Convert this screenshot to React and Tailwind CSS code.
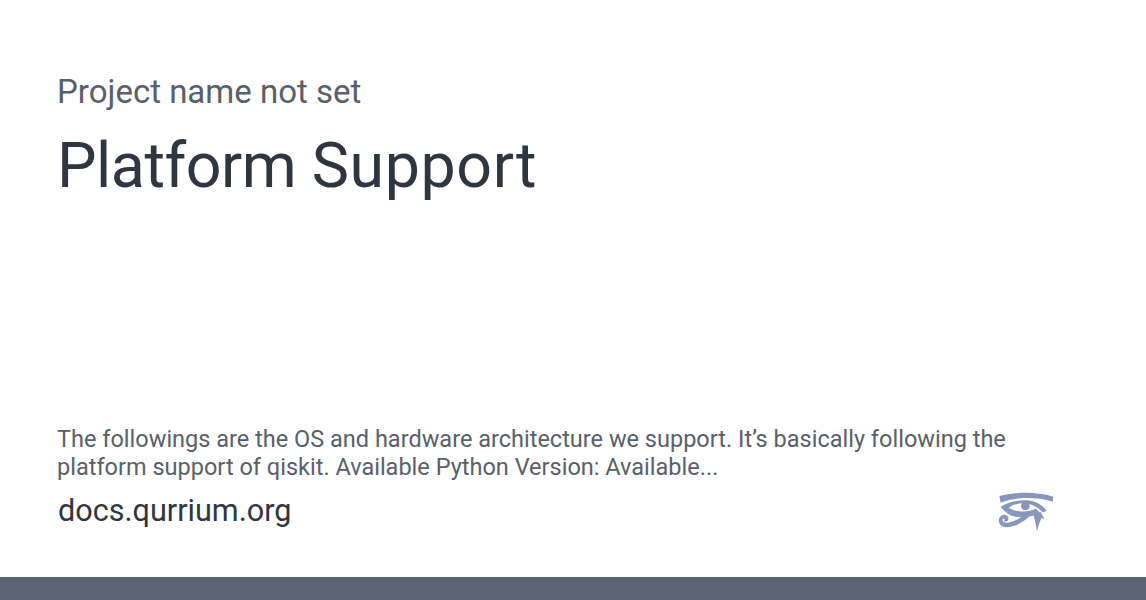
function EyeLogo() {
  return (
    <svg viewBox="54 43 168 120" className="w-14 h-10 shrink-0" fill="#8a97bb">
      {/* brow */}
      <path d="M58 58 C100 48 160 42 220 60 L218 75 C190 67 170 64 135 64 C110 64 85 69 62 78 Z" />
      {/* upper lid and lower lid */}
      <path d="M62 90 C85 76 112 70 140 71 C165 72 190 86 200 103 L188 107 C172 90 152 80 128 80 C110 80 96 86 86 93 C102 104 125 107 150 102 L168 96 L180 108 C160 120 125 124 105 120 C88 116 72 104 62 90 Z" />
      {/* iris */}
      <circle cx="136" cy="88" r="13" />
      {/* tear */}
      <path d="M160 114 L182 106 L188 118 L194 128 L184 124 L178 140 L171 164 L166 136 Z" />
      {/* spiral */}
      <path d="M152 116 C132 136 105 150 82 152 C64 153 53 140 57 126 C61 112 80 110 85 122 C88 132 78 138 71 133 C76 128 72 122 68 128 C66 135 74 140 84 138 C105 134 125 122 142 110 Z" />
    </svg>
  )
}

function App() {
  return (
    <div className="h-[600px] w-full flex flex-col bg-white font-['Roboto',sans-serif]">
      <div className="flex-1 flex flex-col justify-between pl-[57px] pr-[92px] pt-[70px] pb-[44px]">
        {/* Header */}
        <div>
          <p className="text-[33px] leading-[44px] text-[#596069]">Project name not set</p>
          <h1 className="text-[62.7px] leading-[75px] mt-[14px] text-[#2f3640]">
            <span className="tracking-[-0.5px]">Platform</span>{' '}
            <span className="tracking-[0.6px]">Support</span>
          </h1>
        </div>

        {/* Description and footer */}
        <div>
          <p className="text-[23.52px] leading-[28px] text-[#596069]">
            The followings are the OS and hardware architecture we support. It’s basically following the platform support of qiskit. Available Python Version: Available...
          </p>
          <div className="flex items-center justify-between mt-[8px]">
            <span className="text-[30.6px] leading-[44px] pl-px text-[#2f3640]">docs.qurrium.org</span>
            <EyeLogo />
          </div>
        </div>
      </div>
      {/* Bottom bar */}
      <div className="h-[23px] bg-[#5b6470]" />
    </div>
  )
}

export default App
